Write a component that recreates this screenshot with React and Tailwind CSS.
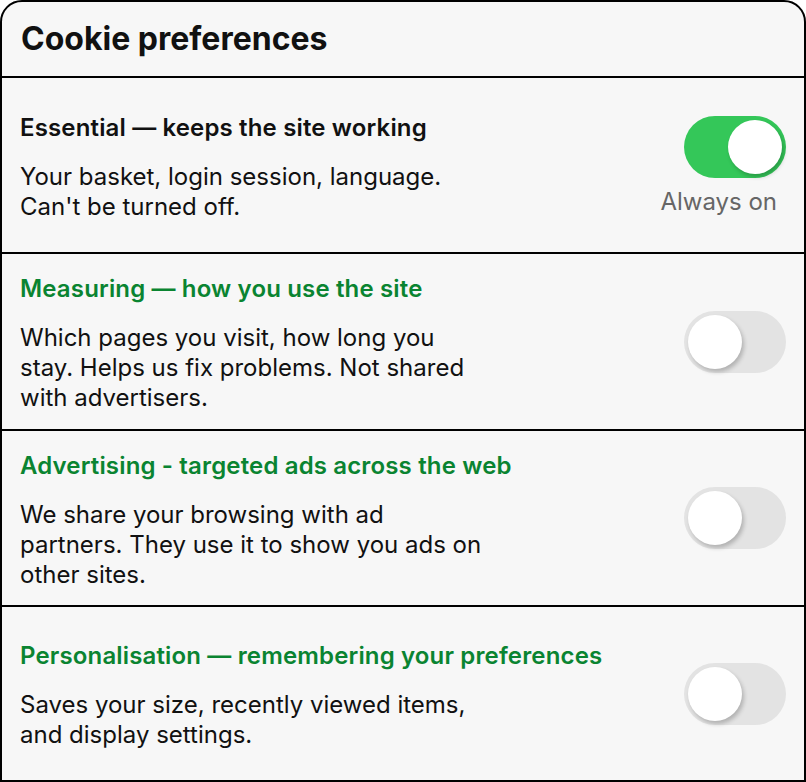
import React from "react";

const rows = [
    {
        title: "Essential — keeps the site working",
        body: "Your basket, login session, language. Can't be turned off.",
        green: false,
        on: true,
        h: "h-[176px]",
    },
    {
        title: "Measuring — how you use the site",
        body: "Which pages you visit, how long you stay. Helps us fix problems. Not shared with advertisers.",
        green: true,
        on: false,
        h: "h-[177px]",
    },
    {
        title: "Advertising - targeted ads across the web",
        body: "We share your browsing with ad partners. They use it to show you ads on other sites.",
        green: true,
        on: false,
        h: "h-[176px]",
    },
    {
        title: "Personalisation — remembering your preferences",
        body: "Saves your size, recently viewed items, and display settings.",
        green: true,
        on: false,
        h: "h-[173px]",
    },
];

function Toggle({ on }) {
    return (
        <div
            className={
                on
                    ? "flex h-[62px] w-[102px] items-center justify-end rounded-full bg-[#34c759] px-[4px]"
                    : "flex h-[62px] w-[102px] items-center justify-start rounded-full bg-[#e3e3e3] px-[4px]"
            }
        >
            <div className="h-[54px] w-[54px] rounded-full bg-white shadow-[2px_3px_4px_rgba(0,0,0,0.22)]" />
        </div>
    );
}

export default function App() {
    return (
        <div
            className="flex h-[782px] w-[806px] flex-col overflow-hidden rounded-t-[22px] border-2 border-black bg-[#f7f7f7] text-[#111]"
            style={{ fontFamily: "Inter, 'Noto Sans', sans-serif" }}
        >
            <div className="flex h-[76px] shrink-0 items-center border-b-2 border-black px-[19px]">
                <h1 className="text-[32px] font-bold leading-none">
                    Cookie preferences
                </h1>
            </div>
            {rows.map((row, i) => (
                <div
                    key={row.title}
                    className={`${row.h} flex shrink-0 items-center justify-between px-[18px] ${
                        i < rows.length - 1 ? "border-b-2 border-black" : ""
                    }`}
                >
                    <div className="w-[465px] pt-[4px]">
                        <div
                            className={
                                row.green
                                    ? "mb-[19px] whitespace-nowrap text-[24px] font-semibold leading-[30px] tracking-[0.15px] text-[#0a8431]"
                                    : "mb-[19px] whitespace-nowrap text-[24px] font-semibold leading-[30px] tracking-[0.15px] text-[#111]"
                            }
                        >
                            {row.title}
                        </div>
                        <p className="text-[24px] leading-[30px]">{row.body}</p>
                    </div>
                    <div
                        className={
                            row.on
                                ? "flex flex-col items-end gap-[9px] pt-[3px]"
                                : "flex flex-col items-end gap-[9px]"
                        }
                    >
                        <Toggle on={row.on} />
                        {row.on && (
                            <span className="mr-[9px] text-[24px] leading-[30px] text-[#666]">
                                Always on
                            </span>
                        )}
                    </div>
                </div>
            ))}
        </div>
    );
}
